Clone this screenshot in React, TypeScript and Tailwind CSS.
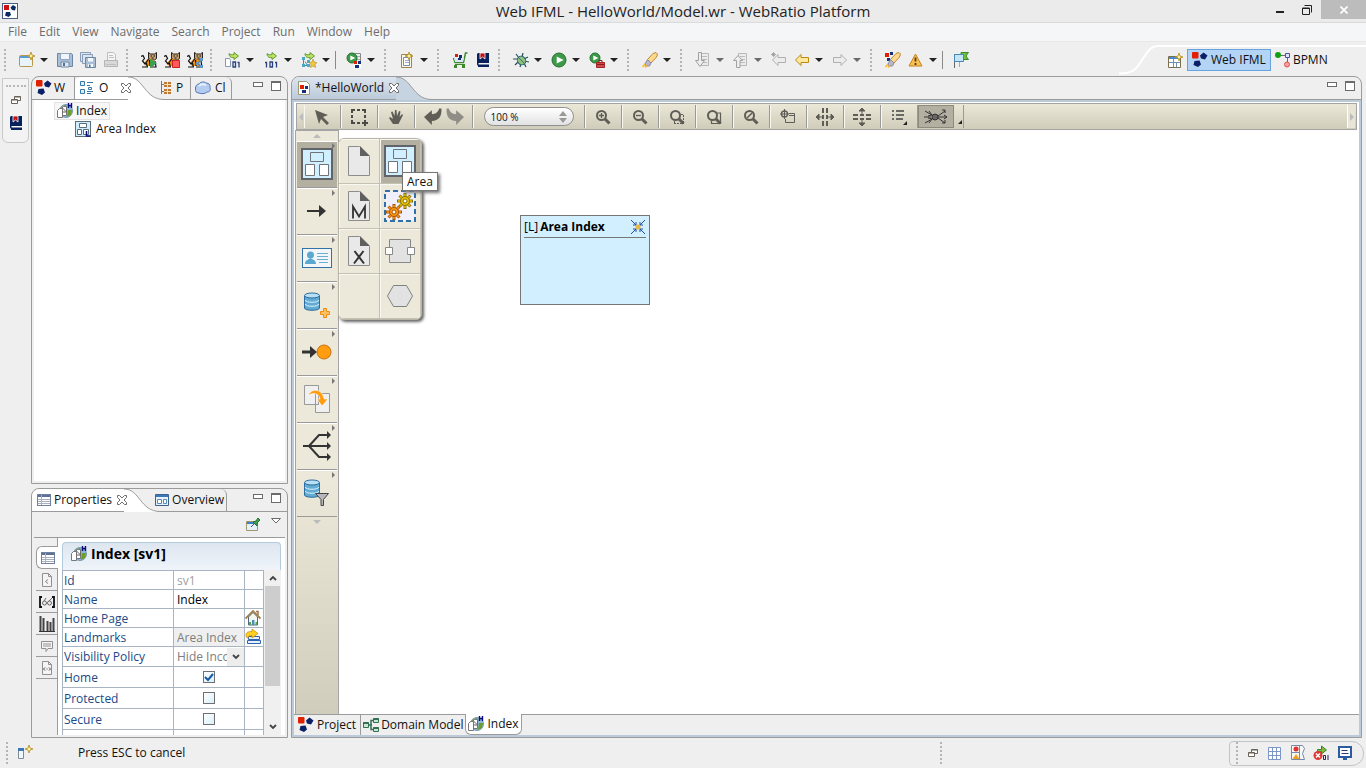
import React from 'react';
import clsx from 'clsx';

interface IconProps {
  className?: string;
}

interface SvgProps extends IconProps {
  children: React.ReactNode;
  box?: number;
}

function Svg({ className = 'w-4 h-4', box = 16, children }: SvgProps) {
  return (
    <svg viewBox={`0 0 ${box} ${box}`} className={clsx('shrink-0', className)} fill="none" aria-hidden="true">
      {children}
    </svg>
  );
}

/* ---------- shared icons ---------- */

function LogoIcon({ className }: IconProps) {
  return (
    <Svg className={className}>
      <rect x="0" y="0" width="6.500" height="6.500" rx="1" fill="#e02000" />
      <path d="M11.500.5l4 3-2.500 4-4-1-1-3z" fill="#0a1f66" />
      <path d="M2.500 9l5-.5 1.500 4-3 2.500-4.500-2z" fill="#0a1f66" />
    </Svg>
  );
}

function AppIcon() {
  return (
    <Svg>
      <rect x=".5" y=".5" width="15" height="15" fill="#fff" stroke="#4a5f80" />
      <rect x="2" y="2" width="5" height="5" fill="#d01010" />
      <path d="M11 2l3 2-1 3.500-3-.5-1.500-2.500z" fill="#0a2a60" />
      <path d="M4 9l4 0 1 3-2.500 2-3.500-1.500z" fill="#0a2a60" />
    </Svg>
  );
}

function IndexIcon() {
  return (
    <Svg>
      <circle cx="9" cy="8" r="6.500" fill="#8ab8dc" stroke="#7a98b0" />
      <path d="M4 4l5-2 1 4-3 2zM11 7l4 0-1 5-4 2z" fill="#6a9e28" />
      <path d="M.5 7.500l2-2h3v9h-5zM4.500 5.500l2-2h3v9h-4" fill="#fff" stroke="#777" />
      <path d="M5.500 5l4 4M9.500 5.500v3.500h-4" stroke="#666" />
      <path d="M11.500 0v5M14.500 0v5M11.500 2.500h3" stroke="#0a0a80" strokeWidth="1.400" />
    </Svg>
  );
}

function AreaSmallIcon() {
  return (
    <Svg>
      <rect x=".5" y=".5" width="15" height="15" fill="#d0eeff" stroke="#5d6d78" />
      <path d="M4.500 2.500h7v4h-7zM2.500 8.500h4v5h-4zM8.500 8.500h5v5h-5z" fill="#fff" stroke="#5d6d78" />
      <path d="M11.500 10v5h4" stroke="#0a0a80" strokeWidth="1.500" />
    </Svg>
  );
}

function BookIcon() {
  return (
    <Svg>
      <path d="M3 1h11v10H3.500v1.500H14V14H3L2 12.500V2z" fill="#08205c" />
      <path d="M5 1h5v6L7.500 5 5 7z" fill="#c01010" stroke="#fff" strokeWidth=".8" />
      <path d="M3 14.500h11" stroke="#08205c" />
    </Svg>
  );
}

function TableIcon({ className }: IconProps) {
  return (
    <Svg className={className}>
      <rect x="1.500" y="2.500" width="13" height="11" fill="#fff" stroke="#71809c" />
      <path d="M2 3h12v2H2z" fill="#5e7099" />
      <path d="M2 7.500h12M2 9.500h12M2 11.500h12M5.500 3v10" stroke="#a8b0c0" />
    </Svg>
  );
}

function RestoreIcon() {
  return (
    <Svg className="w-2.5 h-2.5" box={10}>
      <path d="M3.500 1.500h6v4h-6zM3.500 2h6" fill="#fff" stroke="#6b6259" />
      <path d="M.5 4.500h6v4h-6zM.5 5h6" fill="#fff" stroke="#6b6259" />
    </Svg>
  );
}

function CloseIcon() {
  return (
    <Svg className="w-3 h-3" box={12}>
      <path
        d="M1.500 1.500h2L6 4l2.500-2.500h2v2L8 6l2.500 2.500v2h-2L6 8l-2.500 2.500h-2v-2L4 6 1.500 3.500z"
        fill="#fff"
        stroke="#6c6c6c"
      />
    </Svg>
  );
}

/* ---------- main toolbar icons ---------- */

const Spark = ({ x = 11, y = 4 }: { x?: number; y?: number }) => (
  <path
    d={`M${x} ${y - 4}l1 3 3 1-3 1-1 3-1-3-3-1 3-1z`}
    fill="#fff2a0"
    stroke="#b08a20"
    strokeWidth=".8"
  />
);

const PlayBall = ({ r = 7, cx = 8, cy = 8 }: { r?: number; cx?: number; cy?: number }) => (
  <>
    <circle cx={cx} cy={cy} r={r} fill="#3c9a48" stroke="#237030" />
    <path d={`M${cx - r / 3} ${cy - r / 2}l${r} ${r / 2}-${r} ${r / 2}z`} fill="#fff" />
  </>
);

const NewIcon = () => (
  <Svg>
    <rect x=".5" y="3.500" width="13" height="11" rx="1" fill="#e8f4fc" stroke="#b8964a" />
    <path d="M1 4h12v2H1z" fill="#5a9bd4" />
    <Spark x={12} />
  </Svg>
);

const SaveIcon = () => (
  <Svg>
    <path d="M.5 1.500h14l1 1v12H.5z" fill="#a9bfd8" stroke="#6c86a8" />
    <path d="M3.500 1.500h9v6h-9z" fill="#f0f5fa" stroke="#8ea4c0" />
    <path d="M4 10h8v5H4z" fill="#dfe7ee" stroke="#7088a4" />
    <path d="M6 11h2v3H6z" fill="#56709a" />
  </Svg>
);

const SaveAllIcon = () => (
  <Svg>
    <path d="M.5.500h10v9H.5z" fill="#dce6f0" stroke="#8a9cb8" />
    <path d="M2.500 2.500h10v9h-10z" fill="#dce6f0" stroke="#8a9cb8" />
    <path d="M5.500 5.500h10v10h-10z" fill="#a9bfd8" stroke="#6c86a8" />
    <path d="M8 6h5v3.500H8zM8 12h5v3H8z" fill="#f4f8fb" />
    <path d="M9 12.500h1.500V15H9z" fill="#56709a" />
  </Svg>
);

const PrintIcon = () => (
  <Svg>
    <path d="M4.500.500h6l2 2v6h-8z" fill="#f5f5f5" stroke="#bdbdbd" />
    <path d="M1.500 8.500h13v6h-13z" fill="#d8d8d8" stroke="#b5b5b5" />
    <path d="M3 12.500h10M6 3.500h4M6 5.500h5" stroke="#c0c0c0" />
  </Svg>
);

function CatIcon({ badge }: { badge: 'run' | 'stop' | 'share' }) {
  return (
    <Svg>
      <path d="M7.500.5l2 1.500h4l2-1.500v6l-2 1.500h-4L7.500 6z" fill="#c8a070" stroke="#222" />
      <path d="M9.500 4h1.500M12.500 4h1.500M10.500 6h2" stroke="#111" />
      <path d="M3 11l4-4.500 5 1.500 1 6H5z" fill="#f09010" />
      <path d="M0 4.500l2-1 1.500 3-2 2.500 2.500 3 4-5.500M1 15h6M5 10l1.500 5M8.500 8l.5 6M9 15h6l-1-6" stroke="#111" strokeWidth="1.200" />
      {badge === 'run' && <path d="M9 7l7 4-7 5z" fill="#3aa04c" />}
      {badge === 'stop' && <path d="M8.500 8.500h7v7h-7z" fill="#ff5a5a" stroke="#d02020" />}
      {badge === 'share' && (
        <g>
          <path d="M15 8l-5 3.500 5 3" stroke="#4a80b0" strokeWidth="1.500" />
          <path d="M13 6h3v3h-3zM8.500 10h3v3h-3zM13 13h3v3h-3z" fill="#5c96c8" />
        </g>
      )}
    </Svg>
  );
}

/* Green arrow with generated bits, a page or a node tree beneath it. */
function GenerateIcon({ kind }: { kind: 'page' | 'bits' | 'tree' }) {
  return (
    <Svg>
      {kind === 'page' && <path d="M.5 6.500h4l1 2v6h-5z" fill="#fff" stroke="#8898b0" />}
      {kind === 'bits' && (
        <path d="M2 10.500h1.500v5M12 10.500h1.500v5M7 10h2.500v5H7z" stroke="#28407c" strokeWidth="1.300" />
      )}
      {kind === 'page' && <path d="M12.500 10.500H14v5M8 10h2.500v5H8z" stroke="#28407c" strokeWidth="1.300" />}
      {kind === 'tree' && (
        <g>
          <path d="M2.500 6v7M2.500 13.500h4L4 9.500" stroke="#3b8ea8" />
          <path d="M1 5h3v3H1zM1 12h3v3H1zM6 12h3v3H6zM6 8h3v3H6z" fill="#4aa8c8" />
          <path d="M12 7l1 3 3 .5-2 2 .5 3-2.500-1.500L9.500 15.500l.5-3-2-2 3-.5z" fill="#f0c840" stroke="#b88c20" strokeWidth=".6" />
        </g>
      )}
      <path d="M4 1.500c1 1.500 3 1.500 5 1V.500l4.500 3.500L9 7.500V5.500C6.500 6 4 5 4 1.500z" fill="#c4e05c" stroke="#4c9434" strokeWidth=".9" />
    </Svg>
  );
}

const RunServerIcon = () => (
  <Svg>
    <path d="M8.500 1.500h6v12h-6z" fill="#eee" stroke="#888" />
    <path d="M9 4.500h5M9 7.500h5" stroke="#aaa" />
    <PlayBall r={5} cx={6} cy={6} />
    <path d="M8 9h7v7H8z" fill="#fff" />
    <path d="M8 9h3v3H8z" fill="#e02000" />
    <path d="M12 9h3v3h-3zM9 13h4v3H9z" fill="#14307c" />
  </Svg>
);

const ClipIcon = () => (
  <Svg>
    <path d="M2.500 2.500h10v13h-10z" fill="#fdf6e0" stroke="#a08448" />
    <path d="M4.500 5.500h6v8h-6z" fill="#fff" stroke="#7890b8" />
    <path d="M6 8.500h4M6 10.500h4" stroke="#9ab0d0" />
    <Spark x={10} y={4} />
  </Svg>
);

const CartIcon = () => (
  <Svg>
    <path d="M15.500 1h-2l-2 9.500H3L1.500 6" stroke="#3c8a2c" strokeWidth="1.500" />
    <path d="M2 6h10l-1 4H3z" fill="#dbe8f4" />
    <path d="M3 12.500h10" stroke="#3c8a2c" />
    <path d="M3 2h3v3H3z" fill="#d02010" />
    <path d="M7 3h3v3H7zM6 6h3v2H6z" fill="#103070" />
    <path d="M2 13h3v3H2zM10 13h3v3h-3z" fill="#3c8a2c" />
  </Svg>
);

const BugIcon = () => (
  <Svg>
    <path d="M3 2l3 4M10 1l-1 4M0 7h5M2 13l3-3M7 15l1-3M15 5l-4 2M11 9l5 1M11 11l2 4" stroke="#23505c" strokeWidth="1.200" />
    <ellipse cx="8.500" cy="8.500" rx="4" ry="4.500" transform="rotate(-40 8.500 8.500)" fill="#8ec07c" stroke="#2c6870" />
    <path d="M6 6l5 5" stroke="#3a7888" />
  </Svg>
);

const RunIcon = () => (
  <Svg>
    <PlayBall />
  </Svg>
);

const RunExternalIcon = () => (
  <Svg>
    <PlayBall r={5} cx={6} cy={6} />
    <path d="M7.500 10.500h8v5h-8z" fill="#d84848" stroke="#a02828" />
    <path d="M10 10V8.500h3V10M8 12.500h7" stroke="#802020" />
  </Svg>
);

const RocketIcon = ({ dots = false }: { dots?: boolean }) => (
  <Svg>
    {dots && <path d="M0 1h4v4H0z" fill="#e02000" />}
    {dots && <path d="M5 0h3v3H5zM2 6h3v3H2z" fill="#14307c" />}
    <path d="M11 1.500l3-1 1.500 1.500-1 3L9 11 5.500 7.500z" fill="#ffd890" stroke="#b88830" />
    <path d="M5.500 7.500L9 11l-1.500 3H4l-1-2z" fill="#b8b8cc" stroke="#8888a0" />
    <path d="M.5 15l2.500-3M3 15.500l2-2" stroke="#ffb820" strokeWidth="1.500" />
  </Svg>
);

function AnnotationIcon({ up = false }: { up?: boolean }) {
  return (
    <Svg>
      <path d="M5.500 1.500h8v12h-8z" fill="#ececec" stroke="#b8b8b8" />
      <path d="M7 4.500h5M7 7.500h5M7 10.500h5" stroke="#bbb" />
      {up ? (
        <path d="M5 3.500l4.500 5h-2.500v7H3.500v-7H.5z" fill="#eee" stroke="#a0a0a0" />
      ) : (
        <path d="M3.500.500h3v8h3L5 14.500.500 8.500h3z" fill="#eee" stroke="#a0a0a0" />
      )}
    </Svg>
  );
}

function ArrowIcon({ kind }: { kind: 'edit' | 'back' | 'forward' }) {
  const live = kind === 'back';
  return (
    <Svg>
      <path
        d={kind === 'forward' ? 'M14.500 8L9 2.500v3H1.500v5H9v3z' : 'M1.500 8L7 2.500v3h7.500v5H7v3z'}
        fill={live ? '#ffe89c' : '#ececec'}
        stroke={live ? '#b88a18' : '#b0b0b0'}
      />
      {kind === 'edit' && <path d="M2.500 0v5M0 2.500h5M1 1l3 3M4 1L1 4" stroke="#999" strokeWidth=".8" />}
    </Svg>
  );
}

const WarningIcon = () => (
  <Svg>
    <path d="M7.500 2l6.500 12H1z" fill="#f8c050" stroke="#c88420" strokeLinejoin="round" />
    <path d="M7.500 5.500v4M7.500 11v2" stroke="#5c3810" strokeWidth="1.800" />
  </Svg>
);

const FlagIcon = () => (
  <Svg>
    <path d="M1.500 2v14" stroke="#666" />
    <path d="M6.500 10v5" stroke="#8ab0c8" />
    <path d="M8 .500h7.500L13 4l2.500 3.500H8z" fill="#6cc040" stroke="#3c8828" />
    <path d="M1.500 2.500h9v7h-9z" fill="#c4e4f8" stroke="#4888b8" />
  </Svg>
);

const PerspectiveIcon = () => (
  <Svg>
    <path d="M1.500 3.500h12v11h-12z" fill="#fff" stroke="#7a7050" />
    <path d="M2 4h11v2H2z" fill="#4a88c8" />
    <path d="M6.500 6v8M2 9.500h11M9.500 10v4" stroke="#6a90b8" />
    <Spark x={12} />
  </Svg>
);

const BpmnIcon = () => (
  <Svg>
    <circle cx="3" cy="3" r="3" fill="#10a010" />
    <path d="M6 3.500h4M12.500 5v5" stroke="#666688" />
    <path d="M10.500 1.500h4v4h-4z" fill="#e4e4f8" stroke="#50509c" />
    <circle cx="12" cy="12.500" r="2.500" fill="#ffa0a0" stroke="#e05050" />
  </Svg>
);

type ToolEntry = { name: string; icon?: React.ReactNode; caret?: boolean; muted?: boolean; kind?: 'grip' | 'rule' };

const grip: ToolEntry = { name: 'grip', kind: 'grip' };
const rule: ToolEntry = { name: 'rule', kind: 'rule' };

const TOOLBAR: ToolEntry[] = [
  grip,
  { name: 'New', icon: <NewIcon />, caret: true },
  { name: 'Save', icon: <SaveIcon /> },
  { name: 'Save All', icon: <SaveAllIcon /> },
  { name: 'Print', icon: <PrintIcon /> },
  grip,
  { name: 'Start Tomcat', icon: <CatIcon badge="run" /> },
  { name: 'Stop Tomcat', icon: <CatIcon badge="stop" /> },
  { name: 'Restart Tomcat', icon: <CatIcon badge="share" /> },
  grip,
  { name: 'Generate Page', icon: <GenerateIcon kind="page" />, caret: true },
  { name: 'Generate', icon: <GenerateIcon kind="bits" />, caret: true },
  { name: 'Generate Tree', icon: <GenerateIcon kind="tree" />, caret: true },
  rule,
  { name: 'Run on Server', icon: <RunServerIcon />, caret: true },
  grip,
  { name: 'New Task', icon: <ClipIcon />, caret: true },
  grip,
  { name: 'Store', icon: <CartIcon /> },
  { name: 'Learn', icon: <BookIcon /> },
  grip,
  { name: 'Debug', icon: <BugIcon />, caret: true },
  { name: 'Run', icon: <RunIcon />, caret: true },
  { name: 'External Tools', icon: <RunExternalIcon />, caret: true },
  grip,
  { name: 'Search', icon: <RocketIcon />, caret: true },
  grip,
  { name: 'Next Annotation', icon: <AnnotationIcon />, caret: true, muted: true },
  { name: 'Previous Annotation', icon: <AnnotationIcon up />, caret: true, muted: true },
  { name: 'Last Edit', icon: <ArrowIcon kind="edit" /> },
  { name: 'Back', icon: <ArrowIcon kind="back" />, caret: true },
  { name: 'Forward', icon: <ArrowIcon kind="forward" />, caret: true, muted: true },
  grip,
  { name: 'Launch', icon: <RocketIcon dots /> },
  { name: 'Warnings', icon: <WarningIcon />, caret: true },
  rule,
  { name: 'Flag', icon: <FlagIcon /> },
];

function Grip() {
  return <span className="h-[22px] shrink-0 border-l-2 border-dotted border-[#b4b4b4]" />;
}

function ToolbarEntry({ entry }: { entry: ToolEntry }) {
  if (entry.kind === 'grip') {
    return (
      <span className="flex w-[15px] shrink-0 pl-1">
        <Grip />
      </span>
    );
  }
  if (entry.kind === 'rule') {
    return <span className="mr-1.5 h-[18px] w-px shrink-0 bg-[#8a8a8a]" />;
  }
  return (
    <span className="flex shrink-0 items-center">
      <button aria-label={entry.name} className="flex w-[23px] justify-center">
        {entry.icon}
      </button>
      {entry.caret && (
        <button aria-label={`${entry.name} menu`} className="flex h-4 w-[15px] items-center pl-0.5">
          <svg viewBox="0 0 8 4" className="h-1 w-2" aria-hidden="true">
            <path d="M0 0h8L4 4z" fill={entry.muted ? '#6a6a6a' : '#222'} />
          </svg>
        </button>
      )}
    </span>
  );
}

function TitleBar() {
  return (
    <header className="flex h-[23px] shrink-0 border-b border-[#d8dadc] bg-[#ebebeb]">
      <div className="flex w-32 items-center pl-0.5">
        <AppIcon />
      </div>
      <h1 className="flex-1 text-center text-[15px] leading-[23px] text-[#222]">
        Web IFML - HelloWorld/Model.wr - WebRatio Platform
      </h1>
      <div className="flex w-32 items-start justify-end">
        <button aria-label="Minimize" className="flex h-5 w-[26px] items-center justify-center">
          <svg viewBox="0 0 8 8" className="h-2 w-2">
            <path d="M0 5h8v2H0z" fill="#222" />
          </svg>
        </button>
        <button aria-label="Restore" className="flex h-[19px] w-7 items-center justify-center">
          <svg viewBox="0 0 10 10" className="h-2.5 w-2.5" fill="none">
            <path d="M2.500.500h7v7M.5 3h7v6.500H.5zM.5 3.500h7" stroke="#222" />
          </svg>
        </button>
        <button aria-label="Close" className="flex h-[19px] w-[45px] items-center justify-center bg-[#bcbcbc]">
          <svg viewBox="0 0 8 8" className="h-2 w-2">
            <path d="M.5.500l7 7M7.500.500l-7 7" stroke="#fff" strokeWidth="1.700" />
          </svg>
        </button>
      </div>
    </header>
  );
}

const MENUS = ['File', 'Edit', 'View', 'Navigate', 'Search', 'Project', 'Run', 'Window', 'Help'];

function MenuBar() {
  return (
    <nav className="flex h-[19px] shrink-0 items-center gap-3 border-b border-[#e6e8ea] bg-[#f5f6f7] pl-2 text-[#6d6d6d]">
      {MENUS.map((menu) => (
        <button key={menu}>{menu}</button>
      ))}
    </nav>
  );
}

function MainToolbar() {
  return (
    <div className="flex h-[34px] shrink-0 justify-between">
      <div className="flex items-center pt-0.5">
        {TOOLBAR.map((entry, i) => (
          <ToolbarEntry key={i} entry={entry} />
        ))}
      </div>
      <div className="flex pt-[3px]">
        <svg viewBox="0 0 40 30" className="h-[30px] w-10" fill="none" aria-hidden="true">
          <path d="M0 28.500c16 0 18-6 24-15S32 1 40 1" stroke="#fff" strokeWidth="2" />
        </svg>
        <div className="flex w-[207px] items-start border-t-2 border-white pt-0.5 pl-2">
          <button aria-label="Open Perspective" className="mt-1 mr-1">
            <PerspectiveIcon />
          </button>
          <button className="flex h-[22px] items-center gap-[3px] border border-[#66a3e0] bg-[#b3d4f4] px-1">
            <LogoIcon />
            Web IFML
          </button>
          <button className="flex h-[22px] items-center gap-0.5 pl-1">
            <BpmnIcon />
            BPMN
          </button>
        </div>
      </div>
    </div>
  );
}

function TrimStack() {
  return (
    <aside className="w-[31px] shrink-0 pt-0.5 pl-0.5">
      <div className="flex h-[65px] w-[27px] flex-col items-center rounded-b-md border border-[#c8c8c8] bg-[#f3f3f3] pt-1.5">
        <span className="w-5 border-t-2 border-dotted border-[#b8b8b8]" />
        <button aria-label="Restore view" className="mt-2">
          <RestoreIcon />
        </button>
        <button aria-label="Learn" className="mt-2.5">
          <BookIcon />
        </button>
      </div>
    </aside>
  );
}

/* ---------- view stacks ---------- */

function TabCurve({ fill }: { fill: string }) {
  return (
    <svg viewBox="0 0 36 23" className="h-[23px] w-9 shrink-0" aria-hidden="true">
      <path d="M0 0C16 0 16 22.500 36 22.500V23H0z" fill={fill} />
      <path d="M0 0C16 0 16 22.500 36 22.500" fill="none" stroke="#9b9b9b" />
    </svg>
  );
}

function PaneButtons() {
  return (
    <div className="ml-auto flex items-start gap-2 pt-1 pr-1.5">
      <button aria-label="Minimize view" className="mt-px h-[5px] w-2.5 border border-[#6c6c6c] bg-white" />
      <button aria-label="Maximize view" className="h-2.5 w-2.5 border border-t-2 border-[#6c6c6c] bg-white" />
    </div>
  );
}

const WorkspaceTabIcon = () => (
  <Svg>
    <path d="M1.500 1.500h4v4h-4zM1.500 9.500h4v4h-4z" fill="#d8ecfa" stroke="#3878a8" />
    <path d="M8 2.500h6M8 5.500h3M9.500 7.500h3v2h-3zM8 11.500h6M8 13.500h4" stroke="#3878a8" />
  </Svg>
);

const PackageTabIcon = () => (
  <Svg>
    <path d="M1.500 1v13M1.500 4.500h4M1.500 11.500h4" stroke="#777" />
    <path d="M4 2h7v5H4zM4 9h7v5H4z" fill="#c07830" />
    <path d="M7.500 2v12M4 4.500h7M4 11.500h7" stroke="#f8e0b0" />
  </Svg>
);

const CloudIcon = () => (
  <Svg>
    <path
      d="M4 13c-3 0-4-2-3.500-4C0 6 2 4 4 4c1-2 5-3 7-1 3 0 4.500 2 4 4.500 1 3-1 5-3 4.500-2 2-6 2-8 1z"
      fill="#b4ccf0"
      stroke="#5878b0"
    />
    <path d="M4 6c2-2 5-2 7-1" stroke="#e8f2ff" strokeWidth="2" />
  </Svg>
);

function OutlineView() {
  return (
    <section className="flex min-h-0 flex-1 flex-col rounded-t-lg border border-[#9b9b9b] bg-[#efefef]">
      <div className="flex h-[23px] shrink-0 border-b border-[#9b9b9b]">
        <button className="flex w-[43px] items-center gap-0.5 border-r border-[#9b9b9b] pl-1">
          <LogoIcon />W
        </button>
        <div className="flex items-center rounded-tl-md bg-white pl-1">
          <button className="flex items-center gap-1">
            <WorkspaceTabIcon />
            <span className="w-[21px] text-left">O</span>
          </button>
          <button aria-label="Close outline" className="z-10">
            <CloseIcon />
          </button>
        </div>
        <div className="-mr-1 -ml-1 flex">
          <TabCurve fill="#fff" />
        </div>
        <button className="flex w-[31px] items-center border-r border-[#9b9b9b]">
          <PackageTabIcon />P
        </button>
        <button className="flex w-[41px] items-center gap-1 rounded-tr-md border-r border-[#9b9b9b] pl-1">
          <CloudIcon />
          Cl
        </button>
        <PaneButtons />
      </div>
      <ul className="mx-0.5 mb-0.5 flex-1 bg-white pt-0.5">
        <li>
          <span className="ml-5 flex h-[18px] w-fit items-center gap-[3px] border border-[#e2e2e2] bg-[#f7f7f7] px-0.5">
            <IndexIcon />
            Index
          </span>
          <ul>
            <li className="flex h-[18px] items-center gap-[5px] pl-[41px]">
              <AreaSmallIcon />
              Area Index
            </li>
          </ul>
        </li>
      </ul>
    </section>
  );
}

const OverviewIcon = () => (
  <Svg>
    <path d="M1.500 2.500h13v11h-13z" fill="#e8f0f8" stroke="#3c6090" />
    <path d="M2 3h12v2H2z" fill="#3c78b8" />
    <path d="M3.500 7.500h4v4h-4zM9.500 7.500h3v4h-3z" fill="#fff" stroke="#5888b8" />
  </Svg>
);

const PinIcon = () => (
  <Svg>
    <path d="M1.500 4.500h11v9h-11z" fill="#e4f0fa" stroke="#a09868" />
    <path d="M2 5h9v2H2z" fill="#3c80c8" />
    <path d="M6 10l4-4" stroke="#555" />
    <path d="M8 5l3-1 2-3 2 2-2.500 2.500L12 9z" fill="#40a050" stroke="#207030" />
  </Svg>
);

const HouseIcon = () => (
  <Svg>
    <path d="M3.500 7v8h9V7L8 2.500z" fill="#f4f8f0" stroke="#506878" />
    <path d="M11 1.500h2V5" stroke="#a07050" strokeWidth="1.500" />
    <path d="M.5 8.500L8 1l7.500 7.500" stroke="#a08050" strokeWidth="1.800" />
    <path d="M7 10h2.500v5H7z" fill="#4a90b8" />
    <path d="M4 12h2v3H4zM10.500 12H12v3h-1.500z" fill="#58a850" />
  </Svg>
);

const LandmarkIcon = () => (
  <Svg>
    <path d="M3.500 7.500h11v3h-11zM2.500 11.500h13v3h-13z" fill="#e4f0ff" stroke="#2c64b0" />
    <path d="M1 6c0-3 3-3.500 6-3.500V0l6 4.500L7 9V6.500C4 6.500 3 7 3 9 1.500 9 1 8 1 6z" fill="#ffd020" stroke="#c89010" strokeWidth=".8" />
  </Svg>
);

const SideTabIcons = [
  <Svg key="page">
    <path d="M3.500 1.500h6l3 3v10h-9zM9.500 1.500v3h3" fill="#f4f4f4" stroke="#909090" />
    <path d="M9 7.500L6.500 9.500 9 11.500" stroke="#808080" />
  </Svg>,
  <Svg key="glasses">
    <path d="M3 3H1v10h2M13 3h2v10h-2" stroke="#111" strokeWidth="1.800" />
    <circle cx="5.500" cy="9" r="2" stroke="#666" />
    <circle cx="10.500" cy="9" r="2" stroke="#666" />
    <path d="M5 7l2-3M10 7l3-3" stroke="#666" />
  </Svg>,
  <Svg key="bars">
    <path d="M1.500 0v15M4.500 2v13M8.500 5v10M11.500 6v9M14.500 2v13" stroke="#444" strokeWidth="2" />
    <path d="M0 15.500h16" stroke="#333" />
  </Svg>,
  <Svg key="bubble">
    <path d="M2.500 3.500h11v7H9l-2 3v-3H2.500z" fill="#f4f4f4" stroke="#909090" />
    <path d="M4 5h8v4H4z" fill="#c4c4c4" />
  </Svg>,
  <Svg key="source">
    <path d="M3.500 1.500h6l3 3v10h-9zM9.500 1.500v3h3" fill="#f4f4f4" stroke="#909090" />
    <path d="M6 7.500L4.500 9 6 10.500M10 7.500L11.500 9 10 10.500M7.500 9h1" stroke="#444" />
  </Svg>,
];

type Property = {
  label: string;
  height: string;
  value?: string;
  readOnly?: boolean;
  shaded?: boolean;
  kind: 'text' | 'select' | 'check';
  checked?: boolean;
  icon?: React.ReactNode;
};

const PROPERTIES: Property[] = [
  { label: 'Id', height: 'h-[19px]', value: 'sv1', readOnly: true, kind: 'text' },
  { label: 'Name', height: 'h-[19px]', value: 'Index', kind: 'text' },
  { label: 'Home Page', height: 'h-[19px]', value: '', kind: 'text', icon: <HouseIcon /> },
  { label: 'Landmarks', height: 'h-[19px]', value: 'Area Index', readOnly: true, shaded: true, kind: 'text', icon: <LandmarkIcon /> },
  { label: 'Visibility Policy', height: 'h-5', value: 'Hide Inco', kind: 'select' },
  { label: 'Home', height: 'h-[21px]', kind: 'check', checked: true },
  { label: 'Protected', height: 'h-[21px]', kind: 'check' },
  { label: 'Secure', height: 'h-[21px]', kind: 'check' },
];

function PropertyField({ property, id }: { property: Property; id: string }) {
  if (property.kind === 'check') {
    return (
      <span className="relative mx-auto block h-3 w-3">
        <input
          id={id}
          type="checkbox"
          defaultChecked={property.checked}
          className="peer block h-3 w-3 appearance-none border border-[#707070] bg-gradient-to-br from-white to-[#d8f0fa]"
        />
        <svg viewBox="0 0 12 12" className="pointer-events-none absolute inset-0 hidden h-3 w-3 peer-checked:block" fill="none">
          <path d="M2 6l3 3 5-6" stroke="#1858a8" strokeWidth="2" />
        </svg>
      </span>
    );
  }
  if (property.kind === 'select') {
    return (
      <span className="flex h-[18px]">
        <select id={id} className="w-[53px] appearance-none overflow-hidden pl-[3px] text-[#7d7d7d]">
          <option>{property.value}</option>
        </select>
        <span className="flex flex-1 items-center justify-center bg-[#ededed]">
          <svg viewBox="0 0 8 6" className="h-1.5 w-2" fill="none">
            <path d="M1 1l3 3 3-3" stroke="#444" strokeWidth="1.800" />
          </svg>
        </span>
      </span>
    );
  }
  return (
    <input
      id={id}
      type="text"
      defaultValue={property.value}
      readOnly={property.readOnly}
      className={clsx(
        'block h-[18px] w-full pl-[3px] outline-none',
        property.shaded ? 'bg-[#efefef] text-[#7d7d7d]' : property.readOnly ? 'text-[#a0a0a0]' : 'text-black',
      )}
    />
  );
}

function PropertiesView() {
  return (
    <section className="flex h-[250px] shrink-0 flex-col rounded-t-lg border border-[#9b9b9b] bg-[#efefef]">
      <div className="flex h-[23px] shrink-0 border-b border-[#9b9b9b]">
        <div className="flex items-center gap-1 rounded-tl-lg bg-white pl-1">
          <button className="flex items-center gap-0.5">
            <TableIcon />
            Properties
          </button>
          <button aria-label="Close properties" className="z-10">
            <CloseIcon />
          </button>
        </div>
        <div className="-mr-2 -ml-1 flex">
          <TabCurve fill="#fff" />
        </div>
        <button className="flex items-center gap-0.5 rounded-tr-md border-r border-[#9b9b9b] px-0.5">
          <OverviewIcon />
          Overview
        </button>
        <PaneButtons />
      </div>
      <div className="mx-0.5 flex h-[26px] shrink-0 items-center justify-end gap-2.5 border-b border-[#9b9b9b] pr-1">
        <button aria-label="Pin view">
          <PinIcon />
        </button>
        <button aria-label="View menu" className="mb-2">
          <svg viewBox="0 0 10 6" className="h-1.5 w-2.5">
            <path d="M.5.500h9L5 5z" fill="#fff" stroke="#6c6c6c" />
          </svg>
        </button>
      </div>
      <div className="mr-0.5 mb-0.5 ml-1 flex min-h-0 flex-1">
        <div className="w-[22px] shrink-0 border-r border-[#9b9b9b]">
          <button
            aria-label="General"
            className="mt-2 flex h-[23px] w-[22px] items-center justify-center rounded-l-md border border-r-0 border-[#9b9b9b] bg-white"
          >
            <TableIcon className="h-4 w-4" />
          </button>
          {SideTabIcons.map((icon, i) => (
            <button key={i} aria-label={`Section ${i + 1}`} className="flex h-[22px] w-full items-center justify-center border-b border-[#9b9b9b]">
              {icon}
            </button>
          ))}
        </div>
        <div className="flex min-w-0 flex-1 flex-col overflow-hidden bg-white pt-1 pr-1 pl-1">
          <h2 className="flex h-7 shrink-0 items-center gap-1 rounded-t-sm border border-b-0 border-[#b4cce0] bg-gradient-to-b from-[#dde6f0] to-[#f0f4fa] px-2 pb-1.5 text-[14px] font-bold text-black">
            <IndexIcon />
            Index [sv1]
          </h2>
          <div className="flex min-h-0 flex-1 overflow-hidden">
            <table className="h-fit flex-1 table-fixed border-collapse">
              <colgroup>
                <col className="w-[111px]" />
                <col className="w-[71px]" />
                <col className="w-[19px]" />
              </colgroup>
              <tbody>
                {PROPERTIES.map((property) => {
                  const id = property.label.toLowerCase().replace(' ', '-');
                  return (
                    <tr key={property.label} className={property.height}>
                      <th className="border border-[#a9b4c2] p-0 pl-px text-left font-normal text-[#204a87]">
                        <label htmlFor={id} className="block leading-[17px]">
                          {property.label}
                        </label>
                      </th>
                      <td className="border border-[#a9b4c2] p-0">
                        <PropertyField property={property} id={id} />
                      </td>
                      <td className="border border-[#a9b4c2] p-0">
                        {property.icon && (
                          <button aria-label={`${property.label} options`} className="block">
                            {property.icon}
                          </button>
                        )}
                      </td>
                    </tr>
                  );
                })}
                <tr className="h-5">
                  <td className="border border-[#a9b4c2]" />
                  <td className="border border-[#a9b4c2]" />
                  <td className="border border-[#a9b4c2]" />
                </tr>
              </tbody>
            </table>
            <div className="flex w-[17px] shrink-0 flex-col items-center bg-[#f0f0f0]">
              <button aria-label="Scroll up" className="flex h-4 items-center">
                <svg viewBox="0 0 8 6" className="h-1.5 w-2" fill="none">
                  <path d="M1 5l3-3 3 3" stroke="#444" strokeWidth="1.800" />
                </svg>
              </button>
              <span className="h-[100px] w-[15px] bg-[#cdcdcd]" />
              <button aria-label="Scroll down" className="mt-auto flex h-4 items-center">
                <svg viewBox="0 0 8 6" className="h-1.5 w-2" fill="none">
                  <path d="M1 1l3 3 3-3" stroke="#444" strokeWidth="1.800" />
                </svg>
              </button>
            </div>
          </div>
        </div>
      </div>
    </section>
  );
}

/* ---------- editor ---------- */

const PageLogoIcon = () => (
  <Svg>
    <path d="M2.500 1.500h8l3 3v10h-11z" fill="#fff" stroke="#9a9a78" />
    <path d="M4 5h4v4H4z" fill="#e02000" />
    <path d="M9 6h3v3H9zM6 10h4v3H6z" fill="#14307c" />
  </Svg>
);

function Magnifier({ children }: { children?: React.ReactNode }) {
  return (
    <Svg>
      <circle cx="6.500" cy="6.500" r="4.500" stroke="#5f5d55" strokeWidth="2" />
      <path d="M10 10l4.500 4.500" stroke="#5f5d55" strokeWidth="3" />
      {children}
    </Svg>
  );
}

const ZOOM_TOOLS = [
  { name: 'Zoom in', icon: <Magnifier><path d="M4 6.500h5M6.500 4v5" stroke="#5f5d55" strokeWidth="1.400" /></Magnifier> },
  { name: 'Zoom out', icon: <Magnifier><path d="M4 6.500h5" stroke="#5f5d55" strokeWidth="1.400" /></Magnifier> },
  { name: 'Zoom area', icon: <Magnifier><path d="M12 5.500h3M14.500 6v9M5 14.500h10M5.500 12v3" stroke="#5f5d55" strokeDasharray="2 1" /></Magnifier> },
  { name: 'Zoom page', icon: <Magnifier><path d="M11 4h3.500v10.500h-9V12" stroke="#5f5d55" strokeWidth="1.200" /></Magnifier> },
  { name: 'Reset zoom', icon: <Magnifier><path d="M4 9l5-5" stroke="#5f5d55" strokeWidth="1.600" /></Magnifier> },
  {
    name: 'Fit',
    icon: (
      <Svg>
        <circle cx="4.500" cy="5" r="3" stroke="#5f5d55" strokeWidth="1.400" />
        <path d="M4.500 0v10M0 5h9M9 4.500h5.500v9h-9V10M9 6.500h5" stroke="#5f5d55" />
      </Svg>
    ),
  },
  {
    name: 'Distribute horizontally',
    icon: (
      <Svg className="h-5 w-5" box={20}>
        <path d="M8 1v5M12 1v5M8 8v4M12 8v4M8 14v5M12 14v5" stroke="#5f5d55" strokeWidth="2" />
        <path d="M1 10h6M13 10h6M4 7l-3 3 3 3zM16 7l3 3-3 3z" fill="#5f5d55" stroke="#5f5d55" />
      </Svg>
    ),
  },
  {
    name: 'Distribute vertically',
    icon: (
      <Svg className="h-5 w-5" box={20}>
        <path d="M1 8h5M1 12h5M8 8h4M8 12h4M14 8h5M14 12h5" stroke="#5f5d55" strokeWidth="2" />
        <path d="M10 1v6M10 13v6M7 4l3-3 3 3zM7 16l3 3 3-3z" fill="#5f5d55" stroke="#5f5d55" />
      </Svg>
    ),
  },
  {
    name: 'Align',
    icon: (
      <Svg className="h-5 w-5" box={20}>
        <path d="M3 4h2M3 8h2M3 12h2M7 4h8M7 8h8M7 12h7" stroke="#444" strokeWidth="1.400" />
        <path d="M18 14v4h-4z" fill="#222" />
      </Svg>
    ),
  },
];

const CELL = 'flex h-full shrink-0 items-center justify-center border-r border-[#9a9a9a] shadow-[inset_1px_0_#f8f7f0]';

function EditorToolbar() {
  return (
    <div className="mx-0.5 mt-px flex h-[27px] shrink-0 border border-[#a4a4a4] bg-gradient-to-b from-[#ebe8d8] to-[#cfccba] p-px">
      <button aria-label="Scroll tools left" className="flex w-1.5 items-center justify-center">
        <svg viewBox="0 0 4 8" className="h-2 w-1"><path d="M4 0v8L0 4z" fill="#bbb" /></svg>
      </button>
      <button aria-label="Select" className={clsx(CELL, 'w-[37px]')}>
        <Svg>
          <path d="M1 1l13 5-5 2 6 6-2 2-6-6-2 5z" fill="#5f5d55" />
        </Svg>
      </button>
      <button aria-label="Marquee" className={clsx(CELL, 'w-[37px]')}>
        <Svg className="h-[18px] w-[18px]" box={18}>
          <path d="M2 5V2h3M7 2h3M12 2h3v3M15 7v3M2 7v3M2 12v3h3M7 15h3M12 15h6M15 12v6" stroke="#4c4a44" strokeWidth="2" />
        </Svg>
      </button>
      <button aria-label="Pan" className={clsx(CELL, 'w-[37px]')}>
        <Svg>
          <path d="M5 15L1 9l1-1 3 2-2-7 1.500-.5L6.500 7 7 1h1.500L9 7l2-5 1.500.5L11.500 8l2.500-3 1 1-3 6-1.500 3z" fill="#5f5d55" />
        </Svg>
      </button>
      <div className={clsx(CELL, 'w-[58px] gap-1')}>
        <button aria-label="Undo">
          <Svg className="h-[18px] w-[18px]"><path d="M0 8l7-6v3.500c3 0 5.500-1.500 6.500-5h2c.5 7-2.500 11-8.500 11V15z" fill="#5f5d55" /></Svg>
        </button>
        <button aria-label="Redo">
          <Svg className="h-[18px] w-[18px]"><path d="M16 8L9 2v3.500C6 5.500 3.500 4 2.500.500h-2C0 7.500 3 11.500 9 11.500V15z" fill="#8f8d85" /></Svg>
        </button>
      </div>
      <div className={clsx(CELL, 'w-[112px]')}>
        <span className="flex h-[19px] w-[90px] items-center rounded-full border border-[#909090] bg-gradient-to-b from-white to-[#e2e2e2] px-1.5 text-[10px]">
          <input aria-label="Zoom level" defaultValue="100 %" className="w-full min-w-0 bg-transparent outline-none" />
          <svg viewBox="0 0 8 12" className="h-3 w-2 shrink-0">
            <path d="M0 5l4-5 4 5zM0 7h8l-4 5z" fill="#999" />
          </svg>
        </span>
      </div>
      {ZOOM_TOOLS.map((tool) => (
        <button key={tool.name} aria-label={tool.name} className={clsx(CELL, 'w-[37px]')}>
          {tool.icon}
        </button>
      ))}
      <button aria-label="Connections" className="flex w-9 shrink-0 items-center justify-center border border-[#8e8b7d] bg-[#b3b0a2]">
        <svg viewBox="0 0 24 16" className="h-4 w-6" fill="none">
          <circle cx="11" cy="8" r="3" fill="#666" stroke="#333" />
          <path d="M1 2l7 4M0 8h7M1 14l7-4M14 7l7-5M14 8h9M14 9l7 5" stroke="#333" />
          <path d="M5 2l3 4-4 1M4 9l4 1-3 4M18 1h3v3M20 6l3 2-3 2M21 11v3h-3" stroke="#333" />
        </svg>
      </button>
      <button aria-label="Connection options" className="flex w-2.5 shrink-0 items-end border-r border-[#9a9a9a] pb-1 pl-1">
        <svg viewBox="0 0 4 4" className="h-1 w-1"><path d="M4 0v4H0z" fill="#222" /></svg>
      </button>
      <button aria-label="Scroll tools right" className="ml-auto flex w-2 items-center justify-center border-l border-white bg-[#e8e5d6]">
        <svg viewBox="0 0 4 8" className="h-2 w-1"><path d="M0 0v8l4-4z" fill="#bbb" /></svg>
      </button>
    </div>
  );
}

function AreaIcon() {
  return (
    <Svg className="h-8 w-8" box={32}>
      <rect x="1" y="1" width="30" height="30" fill="#d0efff" stroke="#606468" strokeWidth="2" />
      <path d="M9.500 4.500h13v9h-13z" stroke="#707478" />
      <path d="M4.500 16.500h9v11h-9zM18.500 16.500h9v11h-9z" fill="#fff" stroke="#707478" />
    </Svg>
  );
}

const Database = () => (
  <>
    <path d="M1.500 4v12c0 3 15 3 15 0V4z" fill="#62acd4" stroke="#2c6ca0" />
    <ellipse cx="9" cy="3.500" rx="7.500" ry="2.500" fill="#b8e0f4" stroke="#2c6ca0" />
    <path d="M2 8c1 3 13 3 14 0M2 12c1 3 13 3 14 0" stroke="#e0f2fc" />
  </>
);

const PALETTE = [
  { name: 'Containers', icon: <AreaIcon /> },
  {
    name: 'Flows',
    icon: (
      <Svg className="h-8 w-8" box={32}>
        <path d="M6 16h13" stroke="#333" strokeWidth="2" />
        <path d="M18 10l7 6-7 6z" fill="#333" />
      </Svg>
    ),
  },
  {
    name: 'Components',
    icon: (
      <Svg className="h-8 w-8" box={32}>
        <rect x="1.500" y="6.500" width="29" height="19" fill="#f2f6f8" stroke="#3272a8" />
        <circle cx="9.500" cy="13" r="3.500" fill="#5aa8d0" />
        <path d="M4 22c0-4 3-4 5.500-6 2.500 2 5.500 2 5.500 6z" fill="#5aa8d0" />
        <path d="M16 11.500h11M16 14.500h11M16 17.500h11M18 20.500h9" stroke="#6aaed4" />
      </Svg>
    ),
  },
  {
    name: 'Operations',
    icon: (
      <Svg className="h-8 w-8" box={32}>
        <g transform="translate(2 3)"><Database /></g>
        <path d="M22.500 19.500h3v3h3v3h-3v3h-3v-3h-3v-3h3z" fill="#ffc060" stroke="#f08c10" />
      </Svg>
    ),
  },
  {
    name: 'Events',
    icon: (
      <Svg className="h-8 w-8" box={32}>
        <path d="M1 16h10" stroke="#333" strokeWidth="3" />
        <path d="M9 10l7 6-7 6z" fill="#333" />
        <circle cx="23" cy="16" r="7" fill="#ff9c10" stroke="#c87010" />
      </Svg>
    ),
  },
  {
    name: 'Modules',
    icon: (
      <Svg className="h-8 w-8" box={32}>
        <path d="M3.500 2.500h14v19h-14zM14.500 10.500h14v19h-14z" fill="#f0f0f0" stroke="#999" />
        <path d="M7 13c3-9 15-7 16 3h4l-6 7-5-7h3c-1-6-8-7-12-3z" fill="#ff9c10" stroke="#fff" strokeWidth=".6" />
      </Svg>
    ),
  },
  {
    name: 'Branches',
    icon: (
      <Svg className="h-8 w-8" box={32}>
        <path d="M2 16h25M8 16L18 5h9M8 16l10 11h9" stroke="#333" strokeWidth="2" />
        <path d="M26 1l4 4-4 4zM26 12l4 4-4 4zM26 23l4 4-4 4z" fill="#333" />
      </Svg>
    ),
  },
  {
    name: 'Filters',
    icon: (
      <Svg className="h-8 w-8" box={32}>
        <g transform="translate(2 2)"><Database /></g>
        <path d="M14.500 16.500h13l-5 6v6h-2.500v-6z" fill="#b8b8bc" stroke="#444" />
      </Svg>
    ),
  },
];

function Palette() {
  return (
    <div className="flex w-11 shrink-0 flex-col border border-b-0 border-[#a4a4a4] bg-gradient-to-b from-[#ece9da] from-60% to-[#d0cdbc] px-px">
      <button aria-label="Scroll palette up" className="flex h-2.5 shrink-0 items-center justify-center">
        <svg viewBox="0 0 8 4" className="h-1 w-2"><path d="M4 0l4 4H0z" fill="#bbb" /></svg>
      </button>
      {PALETTE.map((item, i) => (
        <button
          key={item.name}
          aria-label={item.name}
          className={clsx(
            'relative flex h-[47px] shrink-0 items-center justify-center border-b border-[#9a9a9a] shadow-[inset_0_1px_#fff]',
            i === 0 && 'bg-[#b3b0a2]',
          )}
        >
          {item.icon}
          <svg viewBox="0 0 3 6" className="absolute top-0.5 right-0.5 h-1.5 w-[3px]">
            <path d="M0 0v6l3-3z" fill="#777" />
          </svg>
        </button>
      ))}
      <button aria-label="Scroll palette down" className="flex h-2.5 shrink-0 items-center justify-center">
        <svg viewBox="0 0 8 4" className="h-1 w-2"><path d="M0 0h8L4 4z" fill="#bbb" /></svg>
      </button>
    </div>
  );
}

function PageShape({ children }: { children?: React.ReactNode }) {
  return (
    <Svg className="h-8 w-8" box={32}>
      <path d="M5.500 1.500h11l10 10v19h-21z" fill="#e9e9e9" stroke="#8c8c8c" />
      <path d="M17 1l10 10H17z" fill="#606060" />
      {children}
    </Svg>
  );
}

function Gear({ x, y, fill, stroke }: { x: number; y: number; fill: string; stroke: string }) {
  return (
    <g transform={`translate(${x} ${y})`}>
      <path d="M0-8V8M-8 0H8M-5.500-5.500L5.500 5.500M5.500-5.500L-5.500 5.500" stroke={stroke} strokeWidth="3" />
      <path d="M0-7V7M-7 0H7M-5-5L5 5M5-5L-5 5" stroke={fill} strokeWidth="1.500" />
      <circle r="4.500" fill={fill} stroke={stroke} />
      <circle r="2" fill="#fff" stroke={stroke} />
    </g>
  );
}

const FLYOUT = [
  { name: 'Page', icon: <PageShape /> },
  { name: 'Area', icon: <AreaIcon />, active: true },
  { name: 'Master Page', icon: <PageShape><path d="M10 28.500V16.500l6 10 6-10v12" stroke="#333" strokeWidth="1.800" /></PageShape> },
  {
    name: 'Action',
    icon: (
      <Svg className="h-8 w-8" box={32}>
        <rect x="1" y="1" width="30" height="30" fill="#f0effc" stroke="#3070a8" strokeWidth="2" strokeDasharray="5 3" />
        <Gear x={21} y={11} fill="#e8c400" stroke="#8a7000" />
        <Gear x={10} y={22} fill="#ff9810" stroke="#a85400" />
      </Svg>
    ),
  },
  { name: 'Dialog', icon: <PageShape><path d="M11.500 16l9.500 12.500M20.500 16L11 28.500" stroke="#333" strokeWidth="2" /></PageShape> },
  {
    name: 'Module',
    icon: (
      <Svg className="h-8 w-8" box={32}>
        <path d="M5.500 4.500h21v23h-21z" fill="#e2e2e2" stroke="#888" />
        <path d="M1.500 12.500h7v7h-7zM23.500 12.500h7v7h-7z" fill="#fff" stroke="#888" />
      </Svg>
    ),
  },
  { name: 'Empty' },
  {
    name: 'Hexagon',
    icon: (
      <Svg className="h-8 w-8" box={32}>
        <path d="M3.500 16l6-10.500h13l6 10.500-6 10.500h-13z" fill="#e2e2e2" stroke="#808080" />
      </Svg>
    ),
  },
];

function PaletteFlyout() {
  return (
    <div className="absolute top-2 left-[43px] w-[84px]">
      <div className="grid grid-cols-2 overflow-hidden rounded-md border border-[#b8b5a6] bg-[#ece9da] shadow-[2px_2px_3px_#666]">
        {FLYOUT.map((item) => (
          <button
            key={item.name}
            aria-label={item.name}
            className={clsx(
              'flex h-[45px] items-center justify-center border-r border-b border-[#c4c1b0] shadow-[inset_1px_1px_#f8f7f0]',
              item.active && 'bg-[#b3b0a2]',
            )}
          >
            {item.icon}
          </button>
        ))}
      </div>
      <div role="tooltip" className="absolute top-[34px] left-16 border border-[#767676] bg-white px-1 leading-[17px] shadow-[2px_2px_3px_#777]">
        Area
      </div>
    </div>
  );
}

function AreaNode() {
  return (
    <div className="absolute top-[85px] left-[225px] h-[90px] w-[130px] border border-[#767676] bg-[#d2efff] px-[3px]">
      <div className="flex h-[22px] items-center border-b border-[#767676] text-black">
        <span className="mr-0.5">[L]</span>
        <strong className="flex-1">Area Index</strong>
        <Svg>
          <path d="M1 1l5 5M15 1l-5 5M1 15l5-5M15 15l-5-5" stroke="#2050a0" />
          <path d="M6 3v3H3M10 3v3h3M6 13v-3H3M10 13v-3h3" stroke="#2050a0" />
          <circle cx="8" cy="8" r="2.500" fill="#e8b840" />
        </Svg>
      </div>
    </div>
  );
}

const DomainIcon = () => (
  <Svg>
    <path d="M5 8h4M8 8V3.500h3M8 8v4.500h3" stroke="#337055" strokeWidth="1.500" />
    <path d="M.5 5.500h5v5h-5zM10.500 1.500h5v4h-5zM10.500 10.500h5v4h-5z" fill="#c8e8d4" stroke="#337055" />
    <path d="M.5 6h5M10.500 2h5M10.500 11h5" stroke="#337055" strokeWidth="2" />
  </Svg>
);

function Editor() {
  return (
    <section className="mr-1 ml-[3px] flex min-w-0 flex-1 flex-col rounded-t-lg border border-[#9b9b9b] bg-[#efefef]">
      <div className="flex h-[23px] shrink-0 border-b border-[#9b9b9b]">
        <div className="flex items-center gap-1 rounded-tl-lg bg-gradient-to-b from-[#dce5ef] to-[#bccbda] pl-1">
          <button className="flex items-center gap-[3px]">
            <PageLogoIcon />
            *HelloWorld
          </button>
          <button aria-label="Close editor" className="z-10">
            <CloseIcon />
          </button>
        </div>
        <div className="-ml-1 flex">
          <TabCurve fill="#c6d3e0" />
        </div>
        <PaneButtons />
      </div>
      <div className="flex min-h-0 flex-1 flex-col bg-[#bccbda] p-0.5">
        <div className="flex min-h-0 flex-1 flex-col bg-white">
          <EditorToolbar />
          <div className="relative ml-px flex min-h-0 flex-1 bg-white">
            <Palette />
            <PaletteFlyout />
            <AreaNode />
          </div>
        </div>
        <div className="flex h-[21px] shrink-0 border-t border-[#9b9b9b] bg-[#efefef]">
          <button className="flex items-center gap-[3px] border-r border-[#9b9b9b] px-1">
            <LogoIcon />
            Project
          </button>
          <button className="flex items-center gap-0.5 px-0.5">
            <DomainIcon />
            Domain Model
          </button>
          <button className="-mt-px flex items-center gap-[3px] rounded-b-md border border-t-0 border-[#9b9b9b] bg-white px-0.5">
            <IndexIcon />
            Index
          </button>
        </div>
      </div>
    </section>
  );
}

const TRAY = [
  { name: 'Restore', icon: <RestoreIcon /> },
  {
    name: 'Grid',
    icon: (
      <Svg>
        <path d="M2.500 2.500h12v12h-12zM6.500 2v12M10.500 2v12M2 6.500h12M2 10.500h12" fill="#fff" stroke="#7c96c8" />
      </Svg>
    ),
  },
  {
    name: 'Problems',
    icon: (
      <Svg>
        <path d="M1.500.500h11l2 3-2 5 2 6H1.500zM2 7.500h8M9.500 1v14" fill="#f8f8f4" stroke="#7888a8" />
        <circle cx="6" cy="4" r="2.500" fill="#e03030" />
        <path d="M6 9l3.500 5H2.500z" fill="#f0a020" />
      </Svg>
    ),
  },
  {
    name: 'Generation errors',
    icon: (
      <Svg>
        <path d="M4.500 4.500h4V1l5 4-5 4V6.500h-4z" fill="#80b840" stroke="#3c8030" />
        <circle cx="5" cy="10.500" r="4.500" fill="#e03838" />
        <path d="M3 8.500l4 4M7 8.500l-4 4" stroke="#fff" strokeWidth="1.500" />
        <path d="M15 10v5M10.500 10.500h2v4h-2z" stroke="#202860" />
      </Svg>
    ),
  },
  {
    name: 'Console',
    icon: (
      <Svg>
        <rect x="2" y="2" width="12" height="10" fill="#fff" stroke="#2c5ca0" strokeWidth="2" />
        <path d="M4.500 5.500h6M4.500 8.500h7" stroke="#2c3c78" />
        <path d="M6 13h4v2H6z" fill="#2c5ca0" />
      </Svg>
    ),
  },
];

function StatusBar() {
  return (
    <footer className="flex h-[30px] shrink-0 items-center">
      <div className="flex flex-1 items-center pl-1.5">
        <Grip />
        <button aria-label="Show view" className="mr-11 ml-2.5">
          <Svg>
            <path d="M.5 3.500h5v10h-5z" fill="#f0f8fc" stroke="#7a8c98" />
            <path d="M0 3h6v3H0z" fill="#3c78b8" />
            <Spark x={11} y={4} />
          </Svg>
        </button>
        <span>Press ESC to cancel</span>
      </div>
      <Grip />
      <div className="mr-0.5 ml-[287px] flex h-[25px] w-[135px] items-center rounded-l-sm rounded-r-xl border border-[#c4c4c4] pl-1.5">
        <Grip />
        <div className="flex flex-1 items-center justify-between pr-2.5 pl-2.5">
          {TRAY.map((item) => (
            <button key={item.name} aria-label={item.name}>
              {item.icon}
            </button>
          ))}
        </div>
      </div>
    </footer>
  );
}

export default function App() {
  return (
    <div className="flex h-screen flex-col overflow-hidden bg-[#efefef] font-['Open_Sans',sans-serif] text-[12px] leading-4 whitespace-nowrap text-[#111]">
      <TitleBar />
      <MenuBar />
      <MainToolbar />
      <main className="flex min-h-0 flex-1">
        <TrimStack />
        <div className="flex w-[257px] shrink-0 flex-col gap-1">
          <OutlineView />
          <PropertiesView />
        </div>
        <Editor />
      </main>
      <StatusBar />
    </div>
  );
}
